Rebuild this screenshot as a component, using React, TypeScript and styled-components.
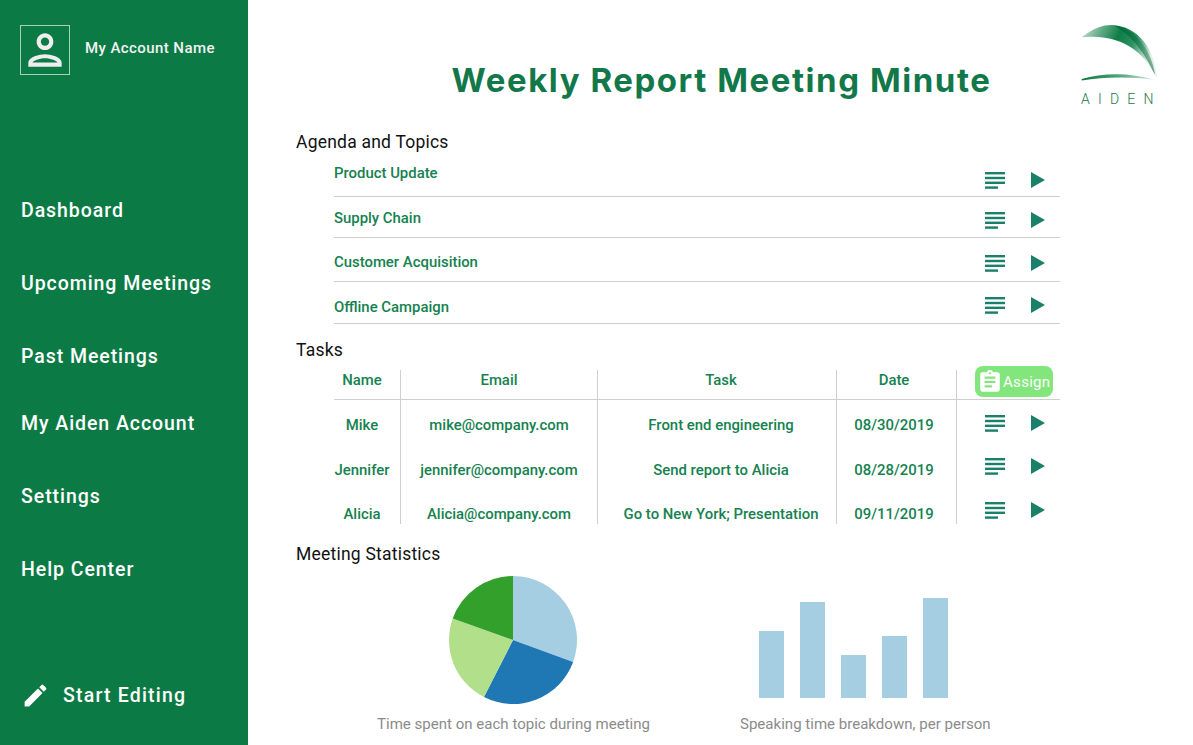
import React from "react";
import styled, { createGlobalStyle } from "styled-components";
import { MdAssignment, MdEdit, MdOutlinePerson } from "react-icons/md";

const GREEN = "#0b7a45";
const TITLE_GREEN = "#12784a";
const TEXT_GREEN = "#15824f";
const TEAL = "#1b8069";
const LINE = "#cfcfcf";

const GlobalStyle = createGlobalStyle`
  html, body {
    margin: 0;
    padding: 0;
    background: #fff;
    font-family: Roboto, "Liberation Sans", sans-serif;
  }
`;

const Page = styled.div`
  display: flex;
  width: 100%;
  height: 100vh;
  overflow: hidden;
  position: relative;
`;

const Sidebar = styled.aside`
  width: 248px;
  flex: none;
  background: ${GREEN};
  color: #fff;
  display: flex;
  flex-direction: column;
  padding: 25px 0 32px 21px;
  box-sizing: border-box;
`;

const Account = styled.div`
  display: flex;
  align-items: center;
  gap: 15px;
  margin-left: -1px;
  margin-bottom: 99px;
`;

const Avatar = styled.div`
  width: 50px;
  height: 50px;
  box-sizing: border-box;
  border: 1px solid rgba(255, 255, 255, 0.65);
  display: flex;
  align-items: center;
  justify-content: center;
  font-size: 50px;
  color: #eee;
  svg {
    flex: none;
  }
`;

const AccountName = styled.span`
  font-size: 15px;
  font-weight: 500;
  letter-spacing: 0.42px;
  color: #f2f2f2;
  padding-bottom: 4px;
`;

const NavList = styled.nav`
  display: flex;
  flex-direction: column;
`;

const NavItem = styled.a<{ $pull?: number }>`
  height: 73px;
  margin-top: ${(p) => -(p.$pull ?? 0)}px;
  display: flex;
  align-items: center;
  font-size: 19.5px;
  font-weight: 500;
  letter-spacing: 0.94px;
`;

const StartEditing = styled.a`
  margin-top: auto;
  display: flex;
  align-items: center;
  gap: 13px;
  font-size: 19.5px;
  font-weight: 500;
  letter-spacing: 1.2px;
  height: 36px;
  svg {
    font-size: 29px;
  }
`;

const Main = styled.main`
  flex: 1;
  min-width: 0;
  padding: 0 133px 0 48px;
  box-sizing: border-box;
  display: flex;
  flex-direction: column;
`;

const Title = styled.h1`
  margin: 59px -87px 0 0;
  font-family: Inter, Roboto, sans-serif;
  font-size: 33px;
  line-height: 42px;
  font-weight: 700;
  letter-spacing: 1.55px;
  text-align: center;
  color: ${TITLE_GREEN};
`;

const LogoBox = styled.div`
  position: absolute;
  top: 25px;
  right: 35px;
  width: 78px;
  display: flex;
  flex-direction: column;
`;

const LogoText = styled.span`
  font-size: 14px;
  font-weight: 300;
  line-height: 14px;
  margin-top: 10px;
  margin-left: 1px;
  letter-spacing: 8.2px;
  color: #1c7a4c;
  white-space: nowrap;
`;

const Heading = styled.h2<{ $top: number }>`
  margin: ${(p) => p.$top}px 0 0;
  font-size: 17.5px;
  line-height: 22px;
  font-weight: 400;
  letter-spacing: 0.22px;
  color: #111;
`;

const Agenda = styled.div`
  margin-left: 38px;
  display: flex;
  flex-direction: column;
`;

const AgendaRow = styled.div<{ $height: number }>`
  display: flex;
  justify-content: space-between;
  align-items: flex-start;
  height: ${(p) => p.$height}px;
  box-sizing: border-box;
  border-bottom: 1px solid ${LINE};
`;

const RowLabel = styled.span<{ $top: number }>`
  margin-top: ${(p) => p.$top}px;
  font-size: 14.9px;
  line-height: 18px;
  font-weight: 500;
  color: ${TEXT_GREEN};
`;

const IconPair = styled.div<{ $top: number }>`
  width: 75px;
  flex: none;
  margin-top: ${(p) => p.$top}px;
  display: flex;
  align-items: center;
  justify-content: flex-start;
  gap: 26px;
`;

const Table = styled.div`
  margin: 9px 0 0 38px;
  display: grid;
  grid-template-columns: 67px 197px 239px 120px 103px;
`;

const HeaderCell = styled.div<{ $last?: boolean; $nudge?: number }>`
  height: 30px;
  box-sizing: border-box;
  border-bottom: 1px solid ${LINE};
  border-right: ${(p) => (p.$last ? "none" : `1px solid ${LINE}`)};
  display: flex;
  align-items: flex-start;
  justify-content: center;
  font-size: 14.9px;
  line-height: 20px;
  font-weight: 500;
  color: ${TEXT_GREEN};
  > span {
    transform: translateX(${(p) => p.$nudge ?? 0}px);
  }
`;

const Cell = styled.div<{ $last?: boolean; $short?: boolean; $nudge?: number }>`
  height: ${(p) => (p.$short ? 35 : 44.5)}px;
  box-sizing: border-box;
  border-right: ${(p) => (p.$last ? "none" : `1px solid ${LINE}`)};
  display: flex;
  align-items: flex-start;
  justify-content: center;
  padding-top: 15px;
  font-size: 14.9px;
  line-height: 20px;
  font-weight: 500;
  color: ${TEXT_GREEN};
  white-space: nowrap;
  > span {
    transform: translateX(${(p) => p.$nudge ?? 0}px);
  }
`;

const ActionCell = styled(Cell)`
  justify-content: flex-start;
  padding: 0 0 0 28px;
`;

const AssignCell = styled(HeaderCell)`
  justify-content: flex-start;
  padding-left: 18px;
  margin-top: -4px;
  height: 34px;
  align-self: end;
`;

const AssignButton = styled.button`
  width: 78px;
  height: 31px;
  padding: 0 0 0 2px;
  border: none;
  border-radius: 8px;
  background: #82e67c;
  color: #fff;
  display: flex;
  align-items: center;
  font-family: inherit;
  font-size: 15px;
  font-weight: 400;
  letter-spacing: 0.3px;
  svg {
    font-size: 26px;
    flex: none;
  }
`;

const Charts = styled.div`
  display: flex;
  gap: 90px;
  margin-top: 11px;
  margin-left: 81px;
`;

const ChartColumn = styled.figure`
  margin: 0;
  display: flex;
  flex-direction: column;
  align-items: center;
`;

const Caption = styled.figcaption`
  margin-top: 10px;
  font-size: 15.06px;
  line-height: 20px;
  color: #8b8b8b;
  white-space: nowrap;
`;

const LinesIcon = () => (
  <svg width="20" height="17" viewBox="0 0 20 17" fill={TEAL}>
    <rect x="0" y="0" width="20" height="2.4" />
    <rect x="0" y="4.8" width="20" height="2.4" />
    <rect x="0" y="9.6" width="20" height="2.4" />
    <rect x="0" y="14.4" width="13" height="2.4" />
  </svg>
);

const PlayIcon = () => (
  <svg width="14" height="16" viewBox="0 0 14 16" fill={TEAL}>
    <path d="M0 0 L14 8 L0 16 Z" />
  </svg>
);

const Logo = () => (
  <svg width="78" height="57" viewBox="0 0 78 57">
    <defs>
      <linearGradient id="swoosh" x1="0" y1="0" x2="1" y2="0.35">
        <stop offset="0" stopColor="#cfe6d8" />
        <stop offset="0.28" stopColor="#5ea883" />
        <stop offset="0.5" stopColor="#0f7d45" />
        <stop offset="0.72" stopColor="#2c9362" />
        <stop offset="1" stopColor="#e0efe7" />
      </linearGradient>
      <linearGradient id="band" gradientUnits="userSpaceOnUse" x1="48" y1="20" x2="68" y2="8">
        <stop offset="0" stopColor="#06683a" stopOpacity="0.9" />
        <stop offset="1" stopColor="#06683a" stopOpacity="0" />
      </linearGradient>
      <linearGradient id="base" x1="0" y1="0" x2="1" y2="0">
        <stop offset="0" stopColor="#0b7a3f" />
        <stop offset="0.5" stopColor="#4fa277" />
        <stop offset="1" stopColor="#dcece3" />
      </linearGradient>
    </defs>
    <path d="M1.7 12.3 C14 3 22 0 32 0 C58 1 75 24 76.7 53.3 C66 30 44 8 1.7 12.3 Z" fill="url(#swoosh)" />
    <path d="M34 0.5 C48 8 62 22 75 50 C72 26 56 3 34 0.5 Z" fill="url(#band)" />
    <path d="M1.7 54 C22 48 50 47 75 55 C50 51.5 24 52 1.7 55.5 Z" fill="url(#base)" />
  </svg>
);

const PIE = [
  { color: "#a6cee3", from: 0, to: 110 },
  { color: "#1f78b4", from: 110, to: 207 },
  { color: "#b2df8a", from: 207, to: 289.6 },
  { color: "#33a02c", from: 289.6, to: 360 },
];

const slicePath = (from: number, to: number, r: number) => {
  const pt = (a: number) => {
    const rad = (a * Math.PI) / 180;
    return `${r + r * Math.sin(rad)} ${r - r * Math.cos(rad)}`;
  };
  return `M${r} ${r} L${pt(from)} A${r} ${r} 0 ${to - from > 180 ? 1 : 0} 1 ${pt(to)} Z`;
};

const PieChart = () => (
  <svg width="128" height="128" viewBox="0 0 128 128">
    {PIE.map((s) => (
      <path key={s.color} d={slicePath(s.from, s.to, 64)} fill={s.color} />
    ))}
  </svg>
);

const BARS = [
  { x: 0, top: 33 },
  { x: 41, top: 4 },
  { x: 82, top: 57 },
  { x: 123, top: 38 },
  { x: 164, top: 0 },
];

const BarChart = () => (
  <svg width="213" height="128" viewBox="0 0 213 128">
    {BARS.map((b) => (
      <rect key={b.x} x={b.x} y={b.top + 22} width="25" height={100 - b.top} fill="#a6cee3" />
    ))}
  </svg>
);

const NAV = [
  { label: "Dashboard" },
  { label: "Upcoming Meetings" },
  { label: "Past Meetings" },
  { label: "My Aiden Account", pull: 6 },
  { label: "Settings" },
  { label: "Help Center" },
];

const AGENDA = [
  { label: "Product Update", height: 44, textTop: 11, iconTop: 18.5 },
  { label: "Supply Chain", height: 41, textTop: 12, iconTop: 14.5 },
  { label: "Customer Acquisition", height: 44, textTop: 15, iconTop: 16.5 },
  { label: "Offline Campaign", height: 42, textTop: 16, iconTop: 14.5 },
];

const TASKS = [
  { name: "Mike", email: "mike@company.com", task: "Front end engineering", date: "08/30/2019", iconTop: 14.5 },
  { name: "Jennifer", email: "jennifer@company.com", task: "Send report to Alicia", date: "08/28/2019", iconTop: 13 },
  { name: "Alicia", email: "Alicia@company.com", task: "Go to New York; Presentation", date: "09/11/2019", iconTop: 12.5, short: true },
];

export default function App() {
  return (
    <Page>
      <GlobalStyle />
      <Sidebar>
        <Account>
          <Avatar>
            <MdOutlinePerson />
          </Avatar>
          <AccountName>My Account Name</AccountName>
        </Account>
        <NavList>
          {NAV.map((n) => (
            <NavItem key={n.label} $pull={n.pull}>
              {n.label}
            </NavItem>
          ))}
        </NavList>
        <StartEditing>
          <MdEdit />
          Start Editing
        </StartEditing>
      </Sidebar>
      <Main>
        <Title>Weekly Report Meeting Minute</Title>
        <Heading $top={30}>Agenda and Topics</Heading>
        <Agenda>
          {AGENDA.map((a) => (
            <AgendaRow key={a.label} $height={a.height}>
              <RowLabel $top={a.textTop}>{a.label}</RowLabel>
              <IconPair $top={a.iconTop}>
                <LinesIcon />
                <PlayIcon />
              </IconPair>
            </AgendaRow>
          ))}
        </Agenda>
        <Heading $top={15}>Tasks</Heading>
        <Table>
          <HeaderCell $nudge={-5}>
            <span>Name</span>
          </HeaderCell>
          <HeaderCell>
            <span>Email</span>
          </HeaderCell>
          <HeaderCell $nudge={4}>
            <span>Task</span>
          </HeaderCell>
          <HeaderCell $nudge={-2.5}>
            <span>Date</span>
          </HeaderCell>
          <AssignCell $last>
            <AssignButton>
              <MdAssignment />
              Assign
            </AssignButton>
          </AssignCell>
          {TASKS.map((t) => (
            <React.Fragment key={t.name}>
              <Cell $short={t.short} $nudge={-5}>
                <span>{t.name}</span>
              </Cell>
              <Cell $short={t.short}>
                <span>{t.email}</span>
              </Cell>
              <Cell $short={t.short} $nudge={4}>
                <span>{t.task}</span>
              </Cell>
              <Cell $short={t.short} $nudge={-2.5}>
                <span>{t.date}</span>
              </Cell>
              <ActionCell $last $short={t.short}>
                <IconPair $top={t.iconTop}>
                  <LinesIcon />
                  <PlayIcon />
                </IconPair>
              </ActionCell>
            </React.Fragment>
          ))}
        </Table>
        <Heading $top={19}>Meeting Statistics</Heading>
        <Charts>
          <ChartColumn>
            <PieChart />
            <Caption>Time spent on each topic during meeting</Caption>
          </ChartColumn>
          <ChartColumn>
            <BarChart />
            <Caption>Speaking time breakdown, per person</Caption>
          </ChartColumn>
        </Charts>
      </Main>
      <LogoBox>
        <Logo />
        <LogoText>AIDEN</LogoText>
      </LogoBox>
    </Page>
  );
}
